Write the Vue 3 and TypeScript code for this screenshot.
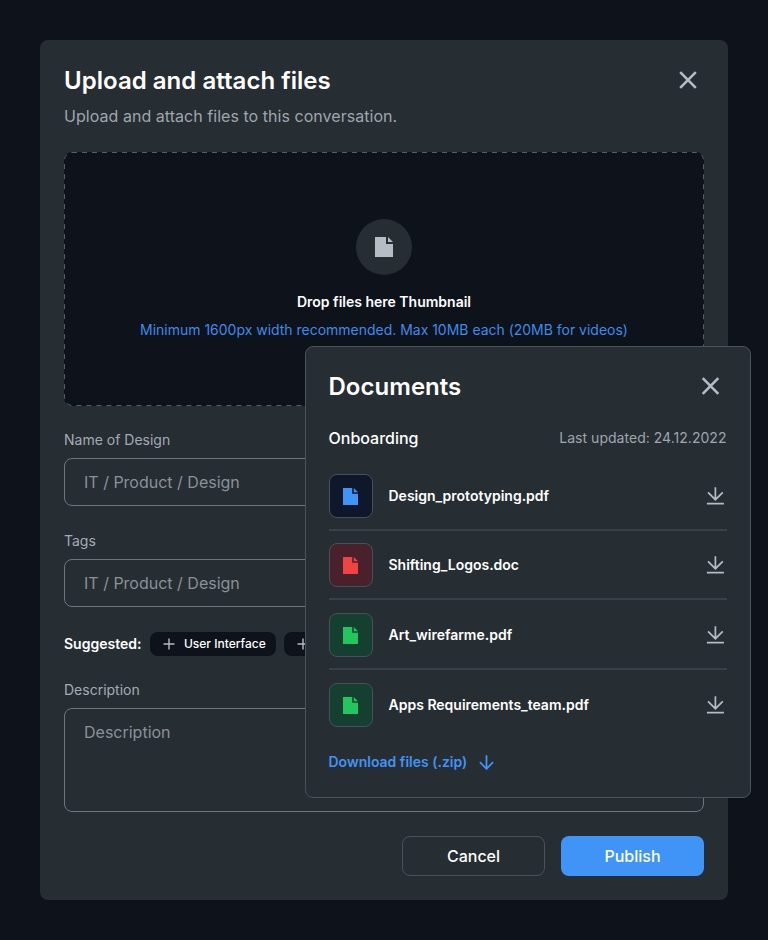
<script setup lang="ts">
import { ref } from 'vue'

interface DocumentFile {
  name: string
  tone: 'blue' | 'red' | 'green'
}

const files: DocumentFile[] = [
  { name: 'Design_prototyping.pdf', tone: 'blue' },
  { name: 'Shifting_Logos.doc', tone: 'red' },
  { name: 'Art_wirefarme.pdf', tone: 'green' },
  { name: 'Apps Requirements_team.pdf', tone: 'green' },
]

const designName = ref('')
const tags = ref('')
const description = ref('')
</script>

<template>
  <main class="stage">
    <section class="modal">
      <header class="head">
        <h1 class="title">Upload and attach files</h1>
        <button class="close" aria-label="Close">
          <svg width="32" height="32" viewBox="0 0 32 32"><path d="M8.2 8.2 23.8 23.8M23.8 8.2 8.2 23.8" /></svg>
        </button>
      </header>
      <p class="subtitle">Upload and attach files to this conversation.</p>

      <div class="dropzone">
        <svg class="dashes" width="640" height="254" viewBox="0 0 640 254">
          <rect x="0.5" y="0.5" width="639" height="253" rx="7.5" />
        </svg>
        <span class="drop-icon">
          <svg width="18" height="20" viewBox="0 0 18 20"><path d="M0 0h11v7h7v13H0zM13 0l5 5h-5z" /></svg>
        </span>
        <strong class="drop-title">Drop files here Thumbnail</strong>
        <span class="drop-hint">Minimum 1600px width recommended. Max 10MB each (20MB for videos)</span>
      </div>

      <label class="field">
        <span class="label">Name of Design</span>
        <input v-model="designName" class="input" placeholder="IT / Product / Design" />
      </label>
      <label class="field field-tags">
        <span class="label">Tags</span>
        <input v-model="tags" class="input" placeholder="IT / Product / Design" />
      </label>

      <div class="suggested">
        <span class="suggested-label">Suggested:</span>
        <button class="chip">
          <svg width="12" height="12" viewBox="0 0 12 12"><path d="M6 .5v11M.5 6h11" /></svg>
          <span>User Interface</span>
        </button>
        <button class="chip">
          <svg width="12" height="12" viewBox="0 0 12 12"><path d="M6 .5v11M.5 6h11" /></svg>
        </button>
      </div>

      <label class="field">
        <span class="label">Description</span>
        <textarea v-model="description" class="input area" placeholder="Description"></textarea>
      </label>

      <footer class="actions">
        <button class="btn btn-outline">Cancel</button>
        <button class="btn btn-primary">Publish</button>
      </footer>
    </section>

    <aside class="documents">
      <header class="head">
        <h2 class="title">Documents</h2>
        <button class="close" aria-label="Close">
          <svg width="32" height="32" viewBox="0 0 32 32"><path d="M7.7 8.2 23.3 23.8M23.3 8.2 7.7 23.8" /></svg>
        </button>
      </header>
      <div class="meta">
        <span class="group">Onboarding</span>
        <span class="updated">Last updated: 24.12.2022</span>
      </div>
      <ul class="files">
        <li v-for="file in files" :key="file.name" class="file">
          <span class="badge" :class="file.tone">
            <svg width="15" height="17" viewBox="0 0 15 17"><path d="M0 0h9.2v5.8H15V17H0zM10.8 0 15 4.2h-4.2z" /></svg>
          </span>
          <span class="file-name">{{ file.name }}</span>
          <button class="download" aria-label="Download">
            <svg width="18" height="18" viewBox="0 0 18 18"><path d="M9.4 .2v12.4M2 5.3l7.4 7.4 7.4-7.4M.9 16.6h17" /></svg>
          </button>
        </li>
      </ul>
      <a class="zip">
        <span class="zip-label">Download files (.zip)</span>
        <svg width="16" height="16" viewBox="0 0 16 16"><path d="M7.5 1.2v13.4M.9 8.2l6.6 6.6 6.6-6.6" /></svg>
      </a>
    </aside>
  </main>
</template>

<style>
body {
  margin: 0;
  background: #0d121b;
}
</style>

<style scoped>
* {
  box-sizing: border-box;
}

.stage {
  position: relative;
  width: 768px;
  height: 940px;
  padding: 40px;
  overflow: hidden;
  background: #0d121b;
  color: #fff;
  font-family: Inter, "Liberation Sans", sans-serif;
}

button {
  padding: 0;
  border: 0;
  background: none;
  color: inherit;
  font: inherit;
  letter-spacing: inherit;
}

svg {
  display: block;
  flex: none;
}

.modal {
  display: flex;
  flex-direction: column;
  height: 860px;
  padding: 24px;
  border-radius: 8px;
  background: #262d33;
}

.head {
  display: flex;
  align-items: center;
  justify-content: space-between;
  height: 32px;
}

.title {
  margin: 0;
  padding-top: 2px;
  font-size: 24px;
  font-weight: 600;
  line-height: 32px;
  letter-spacing: 0.03px;
}

.close svg {
  fill: none;
  stroke: #b5bcc5;
  stroke-width: 2.6;
}

.subtitle {
  margin: 8px 0 24px;
  color: #a0a6ad;
  font-size: 16px;
  line-height: 24px;
  letter-spacing: 0.04px;
}

.dropzone {
  position: relative;
  display: flex;
  flex-direction: column;
  align-items: center;
  height: 254px;
  padding-top: 67px;
  border-radius: 8px;
  background: #0d121b;
}

.dashes {
  position: absolute;
  inset: 0;
}

.dashes rect {
  fill: none;
  stroke: #565d66;
  stroke-dasharray: 5 5;
}

.drop-icon {
  display: flex;
  align-items: center;
  justify-content: center;
  width: 56px;
  height: 56px;
  border-radius: 50%;
  background: #262d33;
  fill: #b5bcc5;
}

.drop-title {
  margin-top: 17px;
  font-size: 14px;
  font-weight: 600;
  line-height: 20px;
}

.drop-hint {
  margin-top: 8px;
  color: #3d8bea;
  font-size: 14px;
  line-height: 20px;
  letter-spacing: -0.015px;
}

.field {
  display: flex;
  flex-direction: column;
  gap: 8px;
  margin-top: 24px;
}

.field-tags {
  margin-top: 25px;
}

.label {
  color: #a5abb3;
  font-size: 14px;
  line-height: 20px;
}

.input {
  width: 100%;
  height: 48px;
  padding: 0 19px;
  border: 1px solid #6e757d;
  border-radius: 8px;
  outline: 0;
  background: transparent;
  color: #fff;
  font: 400 16px/24px Inter, "Liberation Sans", sans-serif;
  resize: none;
}

.input::placeholder {
  color: #8b9198;
  opacity: 1;
}

.area {
  height: 104px;
  padding: 11px 19px;
}

.suggested {
  display: flex;
  align-items: center;
  gap: 8px;
  height: 24px;
  margin-top: 25px;
}

.suggested-label {
  margin-right: 1px;
  padding-bottom: 1px;
  font-size: 14px;
  font-weight: 600;
}

.chip {
  display: flex;
  align-items: center;
  gap: 8.5px;
  width: 126px;
  height: 24px;
  padding: 0 13px;
  border-radius: 8px;
  background: #0d121b;
  font-size: 12px;
  font-weight: 500;
  white-space: nowrap;
}

.chip span {
  padding-bottom: 1px;
}

.chip svg {
  stroke: #b5bcc5;
  stroke-width: 1.4;
}

.actions {
  display: flex;
  justify-content: flex-end;
  gap: 16px;
  margin-top: 24px;
}

.btn {
  width: 143px;
  height: 40px;
  border-radius: 8px;
  font-size: 16px;
  font-weight: 500;
}

.btn-outline {
  border: 1px solid #4a5159;
}

.btn-primary {
  background: #4094f7;
}

/* Floating panel that overlaps the upload dialog */
.documents {
  position: absolute;
  top: 346px;
  left: 304.5px;
  width: 446px;
  height: 452px;
  padding: 23px;
  border: 1px solid #4a5159;
  border-radius: 8px;
  background: #262d33;
}

.meta {
  display: flex;
  align-items: center;
  justify-content: space-between;
  height: 24px;
  margin-top: 24px;
}

.group {
  font-size: 16px;
  font-weight: 500;
}

.updated {
  padding-bottom: 2px;
  color: #a0a6ad;
  font-size: 14px;
  letter-spacing: 0.03px;
}

.files {
  margin: 24px 0 0;
  padding: 0;
  list-style: none;
}

.file {
  display: flex;
  align-items: center;
  padding: 0 2.5px 11px 0;
}

.file + .file {
  padding-top: 12px;
  border-top: 2px solid #394047;
}

.file:nth-child(n + 3) {
  padding-top: 13px;
}

.badge {
  display: flex;
  align-items: center;
  justify-content: center;
  width: 44px;
  height: 44px;
  border: 1px solid #48505a;
  border-radius: 8px;
}

.blue {
  background: #0f172a;
  fill: #4094f7;
}

.red {
  background: #49212d;
  fill: #ef4444;
}

.green {
  background: #153f31;
  fill: #22c55e;
}

.file-name {
  flex: 1;
  margin-left: 16px;
  padding-bottom: 2px;
  font-size: 14px;
  font-weight: 600;
}

.download svg {
  fill: none;
  stroke: #b5bcc5;
  stroke-width: 1.7;
}

.zip {
  display: flex;
  align-items: center;
  gap: 12px;
  height: 20px;
  margin-top: 14px;
  color: #4094f7;
  font-size: 14px;
  font-weight: 600;
}

.zip-label {
  padding-bottom: 2px;
}

.zip svg {
  fill: none;
  stroke: #4094f7;
  stroke-width: 1.8;
}
</style>
